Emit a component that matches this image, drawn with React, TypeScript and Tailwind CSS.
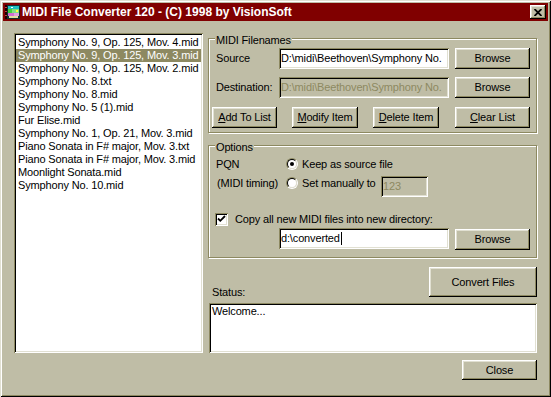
import React from "react";

const files = [
  "Symphony No. 9, Op. 125, Mov. 4.mid",
  "Symphony No. 9, Op. 125, Mov. 3.mid",
  "Symphony No. 9, Op. 125, Mov. 2.mid",
  "Symphony No. 8.txt",
  "Symphony No. 8.mid",
  "Symphony No. 5 (1).mid",
  "Fur Elise.mid",
  "Symphony No. 1, Op. 21, Mov. 3.mid",
  "Piano Sonata in F# major, Mov. 3.txt",
  "Piano Sonata in F# major, Mov. 3.mid",
  "Moonlight Sonata.mid",
  "Symphony No. 10.mid",
];

const raised =
  "bg-[#bfbda6] shadow-[inset_-1px_-1px_0_#000,inset_1px_1px_0_#fff,inset_-2px_-2px_0_#8d8961,inset_2px_2px_0_#e1e0d2]";
const sunken =
  "shadow-[inset_1px_1px_0_#8d8961,inset_-1px_-1px_0_#fff,inset_2px_2px_0_#000,inset_-2px_-2px_0_#e1e0d2]";

function Button({ children, className = "" }: { children: React.ReactNode; className?: string }) {
  return <div className={`flex items-center justify-center ${raised} ${className}`}>{children}</div>;
}

function Field({ children, disabled, className = "" }: { children?: React.ReactNode; disabled?: boolean; className?: string }) {
  return (
    <div
      className={`flex items-center overflow-hidden whitespace-nowrap pl-[2px] ${sunken} ${
        disabled ? "bg-[#bfbda6] text-[#8d8961]" : "bg-white"
      } ${className}`}
    >
      {children}
    </div>
  );
}

function Group({ label, className = "", children }: { label: string; className?: string; children: React.ReactNode }) {
  return (
    <div className={`relative border border-[#8d8961] shadow-[inset_1px_1px_0_#fff,1px_1px_0_#fff] ${className}`}>
      <span className="absolute -top-[5px] left-[6px] bg-[#bfbda6] px-[1px]">{label}</span>
      {children}
    </div>
  );
}

function Radio({ checked }: { checked?: boolean }) {
  return (
    <div className="h-[12px] w-[12px] shrink-0 rounded-full border border-t-[#8d8961] border-l-[#8d8961] border-r-white border-b-white">
      <div className="flex h-full w-full items-center justify-center rounded-full border border-t-black border-l-black border-r-[#e1e0d2] border-b-[#e1e0d2] bg-white">
        {checked && <div className="h-[4px] w-[4px] rounded-full bg-black" />}
      </div>
    </div>
  );
}

function Check() {
  return (
    <div className={`h-[13px] w-[13px] shrink-0 bg-white ${sunken}`}>
      <svg width="13" height="13" viewBox="0 0 13 13">
        <path d="M3 5.5 L5.3 7.8 L10 3" fill="none" stroke="#000" strokeWidth="1.8" />
      </svg>
    </div>
  );
}

// small colourful app icon in the title bar
function AppIcon() {
  return (
    <svg width="16" height="16" viewBox="0 0 16 16" className="shrink-0">
      <rect x="0" y="1" width="2" height="14" fill="#200000" />
      <rect x="0" y="3" width="2" height="1" fill="#c04040" />
      <rect x="0" y="7" width="2" height="1" fill="#c04040" />
      <rect x="0" y="11" width="2" height="1" fill="#c04040" />
      <rect x="2" y="1" width="13" height="14" fill="#103030" />
      <rect x="3" y="2" width="11" height="3" fill="#20c0c0" />
      <rect x="3" y="5" width="4" height="4" fill="#40d040" />
      <rect x="7" y="5" width="7" height="4" fill="#80e080" />
      <rect x="3" y="9" width="6" height="3" fill="#d070d0" />
      <rect x="9" y="9" width="5" height="3" fill="#e0a0e0" />
      <rect x="4" y="12" width="9" height="2" fill="#e0e0a0" />
      <rect x="6" y="3" width="2" height="1" fill="#ffffff" />
      <rect x="11" y="6" width="2" height="2" fill="#ffff40" />
    </svg>
  );
}

const U = ({ children }: { children: React.ReactNode }) => <span className="underline underline-offset-1">{children}</span>;

export default function App() {
  return (
    <div className="h-[397px] w-[551px] bg-[#bfbda6] p-[3px] font-['Liberation_Sans',Arial,sans-serif] text-[11px] leading-[13px] tracking-[-0.15px] text-black shadow-[inset_1px_1px_0_#e1e0d2,inset_-1px_-1px_0_#000,inset_2px_2px_0_#fff,inset_-2px_-2px_0_#8d8961]">
      <div className="flex h-[18px] items-center bg-[#800000]">
        <div className="ml-[2px]">
          <AppIcon />
        </div>
        <span className="ml-[1px] text-[12px] font-bold tracking-[0px] text-white">
          MIDI File Converter 120 - (C) 1998 by VisionSoft
        </span>
        <div className={`ml-auto mr-[2px] flex h-[14px] w-[16px] items-center justify-center ${raised}`}>
          <svg width="8" height="7" viewBox="0 0 8 7">
            <path d="M0.5 0 L7.5 7 M7.5 0 L0.5 7" stroke="#000" strokeWidth="1.8" />
          </svg>
        </div>
      </div>

      <div className="flex pl-[11px] pt-[12px]">
        <div className={`h-[320px] w-[189px] bg-white pl-[2px] pr-[2px] pt-[3px] ${sunken}`}>
          {files.map((f, i) => (
            <div
              key={f}
              className={`h-[13px] whitespace-nowrap pl-[2px] ${i === 1 ? "bg-[#8d8961] text-white" : ""}`}
            >
              {f}
            </div>
          ))}
        </div>

        <div className="ml-[5px] flex w-[329px] flex-col">
          <Group label="MIDI Filenames" className="mt-[5px] h-[95px] pt-[9px]">
            <div className="flex h-[21px] items-center pl-[7px]">
              <span className="w-[63px]">Source</span>
              <Field className="h-[21px] w-[170px]">D:\midi\Beethoven\Symphony No.</Field>
              <Button className="ml-[6px] h-[21px] w-[75px]">Browse</Button>
            </div>
            <div className="mt-[8px] flex h-[21px] items-center pl-[7px]">
              <span className="w-[63px]">Destination:</span>
              <Field disabled className="h-[21px] w-[170px]">D:\midi\Beethoven\Symphony No.</Field>
              <Button className="ml-[6px] h-[21px] w-[75px]">Browse</Button>
            </div>
            <div className="mt-[9px] flex h-[21px] items-center pl-[3px]">
              <Button className="h-[21px] w-[65px]">
                <U>A</U>dd To List
              </Button>
              <Button className="ml-[15px] h-[21px] w-[66px]">
                <U>M</U>odify Item
              </Button>
              <Button className="ml-[15px] h-[21px] w-[66px]">
                <U>D</U>elete Item
              </Button>
              <Button className="ml-[16px] h-[21px] w-[75px]">
                <U>C</U>lear List
              </Button>
            </div>
          </Group>

          <Group label="Options" className="mt-[12px] h-[113px] pt-[10px]">
            <div className="flex h-[16px] items-center pl-[7px]">
              <span className="w-[70px]">PQN</span>
              <Radio checked />
              <span className="ml-[4px]">Keep as source file</span>
            </div>
            <div className="mt-[3px] flex h-[16px] items-center pl-[7px]">
              <span className="w-[70px] pl-[1px]">(MIDI timing)</span>
              <Radio />
              <span className="ml-[4px] w-[79px]">Set manually to</span>
              <Field disabled className="mt-[6px] h-[21px] w-[47px]">123</Field>
            </div>
            <div className="mt-[20px] flex h-[16px] items-center pl-[6px]">
              <Check />
              <span className="ml-[7px]">Copy all new MIDI files into new directory:</span>
            </div>
            <div className="mt-[1px] flex items-start">
              <Field className="ml-[70px] h-[21px] w-[170px]">
                d:\converted<span className="ml-[1px] inline-block h-[13px] w-[1px] bg-black" />
              </Field>
              <Button className="ml-[6px] mt-[1px] h-[21px] w-[75px]">Browse</Button>
            </div>
          </Group>

          <div className="mt-[9px] flex items-end justify-between">
            <span className="-mb-[2px] pl-[4px]">Status:</span>
            <Button className="h-[30px] w-[108px]">Convert Files</Button>
          </div>
          <div className={`ml-[1px] mt-[6px] h-[50px] bg-white pl-[3px] pt-[2px] ${sunken}`}>Welcome...</div>
          <Button className="mt-[7px] h-[20px] w-[75px] self-end">Close</Button>
        </div>
      </div>
    </div>
  );
}
